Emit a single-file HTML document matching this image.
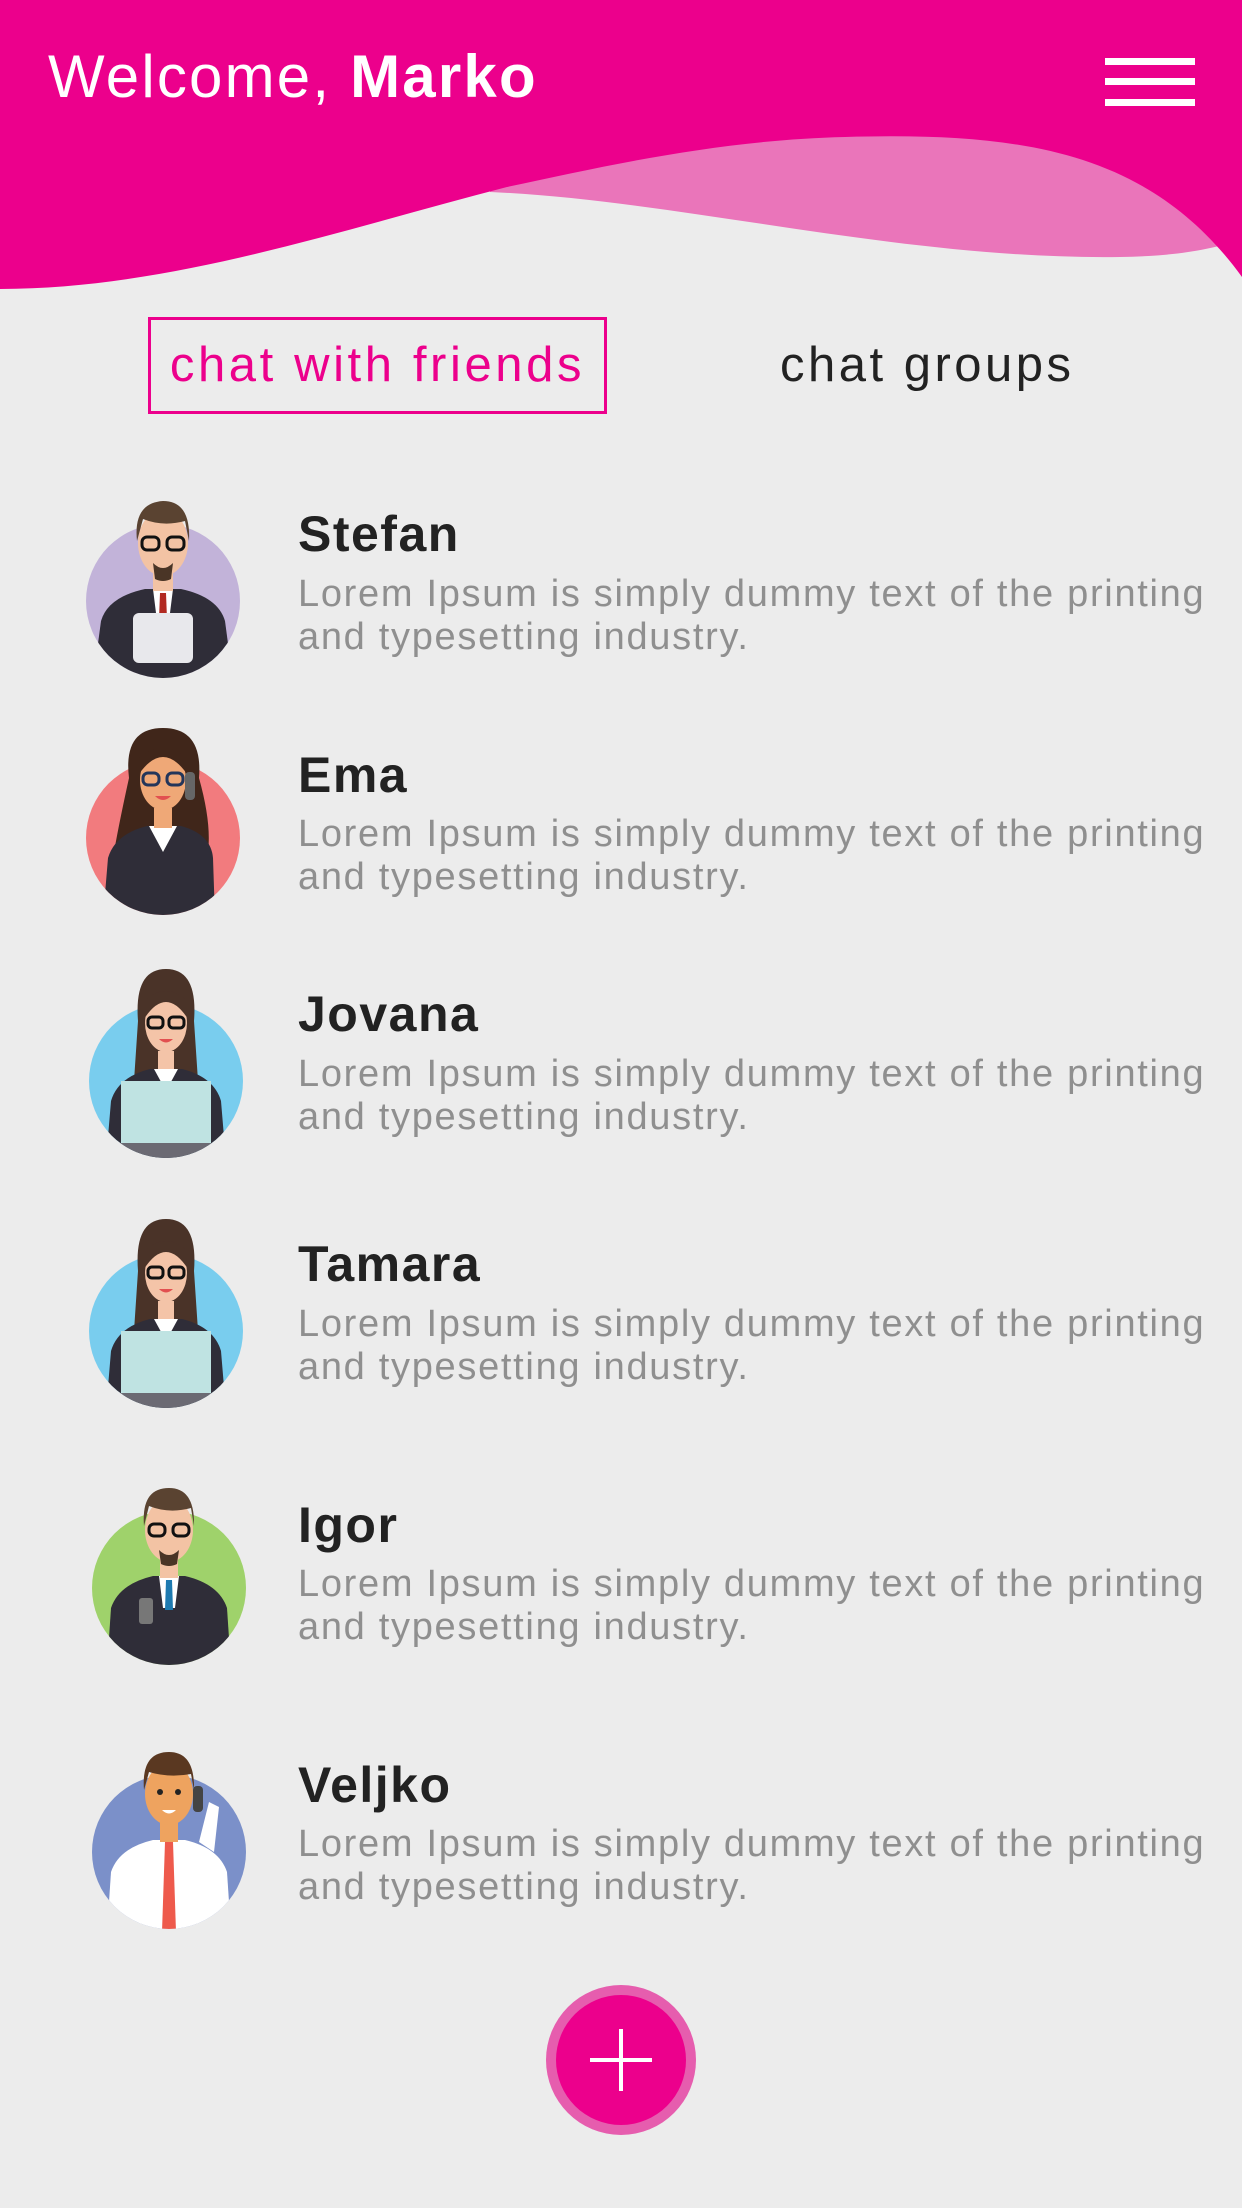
<!DOCTYPE html>
<html><head><meta charset="utf-8"><style>
html,body{margin:0;padding:0}
body{width:1242px;height:2208px;background:#ECECEC;position:relative;overflow:hidden;font-family:"Liberation Sans",sans-serif}
.abs{position:absolute}
.welcome{left:48px;top:42px;font-size:60px;color:#fff;white-space:nowrap;letter-spacing:2.2px}
.welcome b{font-weight:bold}
.bar{position:absolute;left:1105px;width:90px;height:7px;background:#fff}
.tab1{left:148px;top:317px;width:453px;height:91px;border:3px solid #EC008C;color:#EC008C;font-size:49px;line-height:91px;text-align:center;box-sizing:content-box;letter-spacing:3.6px}
.tab2{left:780px;top:317px;height:91px;line-height:97px;font-size:49px;color:#222;white-space:nowrap;letter-spacing:3.5px}
.name{left:298px;font-size:50px;font-weight:bold;color:#222;white-space:nowrap;letter-spacing:1.5px}
.desc{left:298px;font-size:38px;color:#8f8f8f;line-height:43px;white-space:nowrap;letter-spacing:1.7px}
</style></head><body>
<svg class="abs" style="left:0;top:0" width="1242" height="300" viewBox="0 0 1242 300">
<path d="M490,192 C680,200 900,260 1120,257 C1170,256 1200,252 1242,240 L1242,0 L490,0 Z" fill="#EA75BA"/>
<path d="M0,0 H1242 V277 C1150,150 1020,132 845,137 C720,140 610,165 507,187 C340,230 170,289 0,289 Z" fill="#EC008C"/>
</svg>
<div class="abs welcome">Welcome, <b>Marko</b></div>
<div class="bar" style="top:58px"></div>
<div class="bar" style="top:78px"></div>
<div class="bar" style="top:99px"></div>
<div class="abs tab1">chat with friends</div>
<div class="abs tab2">chat groups</div>

<svg width="0" height="0" style="position:absolute"><defs><clipPath id="cc"><circle cx="0" cy="0" r="77"/></clipPath></defs></svg>

<!-- Stefan -->
<svg class="abs" style="left:63px;top:461px" width="200" height="240" viewBox="-100 -140 200 240">
<circle r="77" fill="#C2B3D9"/>
<g clip-path="url(#cc)"><path d="M-70,80 L-62,20 Q-55,-4 -18,-12 L18,-12 Q55,-4 62,20 L70,80 Z" fill="#2F2D38"/>
<path d="M-10,-12 L10,-12 L6,20 L-6,20Z" fill="#fff"/><path d="M-3,-8 L3,-8 L4,18 L-4,18Z" fill="#B22A22"/>
<rect x="-30" y="12" width="60" height="50" rx="6" fill="#E8E8EC"/></g>
<rect x="-10" y="-30" width="20" height="20" fill="#F3C3A4"/>
<ellipse cx="0" cy="-58" rx="25" ry="33" fill="#F3C3A4"/>
<path d="M-26,-60 Q-30,-98 0,-100 Q28,-100 26,-60 L22,-80 Q0,-74 -20,-82Z" fill="#5A4331"/>
<path d="M-10,-38 Q0,-28 10,-38 L8,-22 Q0,-18 -8,-22Z" fill="#4A3526"/>
<rect x="-21" y="-64" width="17" height="13" rx="5" fill="none" stroke="#111" stroke-width="3"/><rect x="4" y="-64" width="17" height="13" rx="5" fill="none" stroke="#111" stroke-width="3"/>
</svg>
<div class="abs name" style="top:505px">Stefan</div>
<div class="abs desc" style="top:573px">Lorem Ipsum is simply dummy text of the printing<br>and typesetting industry.</div>

<!-- Ema -->
<svg class="abs" style="left:63px;top:698px" width="200" height="240" viewBox="-100 -140 200 240">
<circle r="77" fill="#F27B7E"/>
<path d="M-34,-60 Q-40,-110 0,-110 Q40,-110 36,-60 Q50,-10 44,20 L-50,20 Q-45,-10 -34,-60Z" fill="#40261A"/>
<g clip-path="url(#cc)"><path d="M-60,80 L-55,20 Q-48,-4 -16,-12 L18,-12 Q48,-4 50,20 L52,80 Z" fill="#2F2D38"/>
<path d="M-14,-12 L14,-12 L0,14Z" fill="#fff"/><rect x="-50" y="78" width="100" height="10" fill="#111"/></g>
<rect x="-9" y="-30" width="18" height="20" fill="#EFA877"/>
<ellipse cx="0" cy="-58" rx="23" ry="30" fill="#EFA877"/>
<path d="M-24,-64 Q0,-98 24,-64 L24,-80 Q0,-100 -24,-80Z" fill="#40261A"/>
<rect x="-20" y="-65" width="16" height="12" rx="5" fill="none" stroke="#23355A" stroke-width="3"/><rect x="4" y="-65" width="16" height="12" rx="5" fill="none" stroke="#23355A" stroke-width="3"/>
<path d="M-8,-42 L8,-42 Q0,-34 -8,-42Z" fill="#E25050"/>
<rect x="22" y="-66" width="10" height="28" rx="4" fill="#666"/>
</svg>
<div class="abs name" style="top:746px">Ema</div>
<div class="abs desc" style="top:813px">Lorem Ipsum is simply dummy text of the printing<br>and typesetting industry.</div>

<!-- Jovana -->
<svg class="abs" style="left:66px;top:941px" width="200" height="240" viewBox="-100 -140 200 240">
<circle r="77" fill="#79CDEE"/>
<path d="M-28,-60 Q-32,-112 0,-112 Q32,-112 28,-60 L32,0 L-32,0Z" fill="#4A3328"/>
<g clip-path="url(#cc)"><path d="M-60,80 L-55,20 Q-48,-4 -16,-12 L16,-12 Q48,-4 55,20 L60,80 Z" fill="#2F2D38"/>
<path d="M-12,-12 L12,-12 L0,10Z" fill="#fff"/>
<rect x="-45" y="0" width="90" height="64" fill="#BFE3E2"/><rect x="-77" y="62" width="154" height="16" fill="#6B6A73"/></g>
<rect x="-8" y="-30" width="16" height="18" fill="#F4C4A8"/>
<ellipse cx="0" cy="-58" rx="21" ry="29" fill="#F4C4A8"/>
<path d="M-22,-62 Q0,-96 22,-62 L22,-80 Q0,-100 -22,-80Z" fill="#4A3328"/>
<rect x="-18" y="-64" width="15" height="11" rx="4" fill="none" stroke="#111" stroke-width="3"/><rect x="3" y="-64" width="15" height="11" rx="4" fill="none" stroke="#111" stroke-width="3"/>
<path d="M-7,-42 L7,-42 Q0,-35 -7,-42Z" fill="#E25050"/>
</svg>
<div class="abs name" style="top:985px">Jovana</div>
<div class="abs desc" style="top:1053px">Lorem Ipsum is simply dummy text of the printing<br>and typesetting industry.</div>

<!-- Tamara -->
<svg class="abs" style="left:66px;top:1191px" width="200" height="240" viewBox="-100 -140 200 240">
<circle r="77" fill="#79CDEE"/>
<path d="M-28,-60 Q-32,-112 0,-112 Q32,-112 28,-60 L32,0 L-32,0Z" fill="#4A3328"/>
<g clip-path="url(#cc)"><path d="M-60,80 L-55,20 Q-48,-4 -16,-12 L16,-12 Q48,-4 55,20 L60,80 Z" fill="#2F2D38"/>
<path d="M-12,-12 L12,-12 L0,10Z" fill="#fff"/>
<rect x="-45" y="0" width="90" height="64" fill="#BFE3E2"/><rect x="-77" y="62" width="154" height="16" fill="#6B6A73"/></g>
<rect x="-8" y="-30" width="16" height="18" fill="#F4C4A8"/>
<ellipse cx="0" cy="-58" rx="21" ry="29" fill="#F4C4A8"/>
<path d="M-22,-62 Q0,-96 22,-62 L22,-80 Q0,-100 -22,-80Z" fill="#4A3328"/>
<rect x="-18" y="-64" width="15" height="11" rx="4" fill="none" stroke="#111" stroke-width="3"/><rect x="3" y="-64" width="15" height="11" rx="4" fill="none" stroke="#111" stroke-width="3"/>
<path d="M-7,-42 L7,-42 Q0,-35 -7,-42Z" fill="#E25050"/>
</svg>
<div class="abs name" style="top:1235px">Tamara</div>
<div class="abs desc" style="top:1303px">Lorem Ipsum is simply dummy text of the printing<br>and typesetting industry.</div>

<!-- Igor -->
<svg class="abs" style="left:69px;top:1448px" width="200" height="240" viewBox="-100 -140 200 240">
<circle r="77" fill="#9FD26B"/>
<g clip-path="url(#cc)"><path d="M-62,80 L-58,20 Q-50,-4 -16,-12 L16,-12 Q50,-4 58,20 L62,80 Z" fill="#2F2D38"/>
<path d="M-10,-12 L10,-12 L6,20 L-6,20Z" fill="#fff"/><path d="M-3,-8 L3,-8 L4,22 L-4,22Z" fill="#1E7AB0"/>
<rect x="-30" y="10" width="14" height="26" rx="3" fill="#777"/></g>
<rect x="-9" y="-30" width="18" height="20" fill="#F3C3A4"/>
<ellipse cx="0" cy="-58" rx="24" ry="32" fill="#F3C3A4"/>
<path d="M-25,-62 Q-28,-100 0,-100 Q26,-100 25,-62 L22,-80 Q0,-74 -20,-82Z" fill="#5A4331"/>
<path d="M-10,-38 Q0,-28 10,-38 L8,-24 Q0,-20 -8,-24Z" fill="#4A3526"/>
<rect x="-20" y="-64" width="16" height="12" rx="5" fill="none" stroke="#111" stroke-width="3"/><rect x="4" y="-64" width="16" height="12" rx="5" fill="none" stroke="#111" stroke-width="3"/>
</svg>
<div class="abs name" style="top:1496px">Igor</div>
<div class="abs desc" style="top:1563px">Lorem Ipsum is simply dummy text of the printing<br>and typesetting industry.</div>

<!-- Veljko -->
<svg class="abs" style="left:69px;top:1712px" width="200" height="240" viewBox="-100 -140 200 240">
<circle r="77" fill="#7B90C9"/>
<g clip-path="url(#cc)"><path d="M-62,80 L-58,20 Q-50,-4 -16,-12 L16,-12 Q50,-4 58,20 L62,80 Z" fill="#FFFFFF"/>
<path d="M-4,-10 L4,-10 L7,80 L-7,80Z" fill="#EE5A4C"/></g>
<path d="M30,-10 L40,-50 L50,-45 L45,0Z" fill="#fff"/>
<rect x="-9" y="-30" width="18" height="20" fill="#EEA35F"/>
<ellipse cx="0" cy="-58" rx="24" ry="31" fill="#EEA35F"/>
<path d="M-25,-62 Q-28,-100 0,-100 Q26,-100 25,-62 L22,-78 Q0,-74 -20,-80Z" fill="#5A3821"/>
<circle cx="-9" cy="-60" r="3" fill="#222"/><circle cx="9" cy="-60" r="3" fill="#222"/>
<path d="M-7,-42 L7,-42 Q0,-35 -7,-42Z" fill="#fff"/>
<rect x="24" y="-66" width="10" height="26" rx="4" fill="#444"/>
</svg>
<div class="abs name" style="top:1756px">Veljko</div>
<div class="abs desc" style="top:1823px">Lorem Ipsum is simply dummy text of the printing<br>and typesetting industry.</div>

<!-- FAB -->
<svg class="abs" style="left:546px;top:1985px" width="150" height="150" viewBox="0 0 150 150">
<circle cx="75" cy="75" r="75" fill="#E65DAE"/>
<circle cx="75" cy="75" r="65" fill="#EC008C"/>
<rect x="44" y="73" width="62" height="4" fill="#fff"/>
<rect x="73" y="44" width="4" height="62" fill="#fff"/>
</svg>
</body></html>
